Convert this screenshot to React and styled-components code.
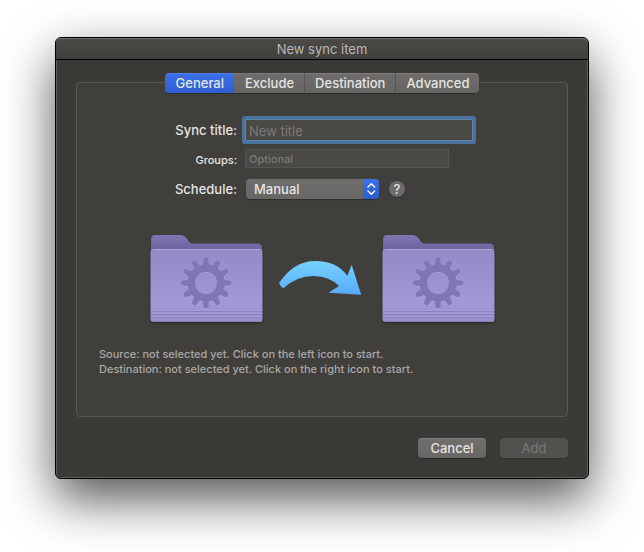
import React, { useState } from "react";
import styled, { createGlobalStyle } from "styled-components";

const tabs = ["General", "Exclude", "Destination", "Advanced"];

const GlobalStyle = createGlobalStyle`
  * {
    box-sizing: border-box;
  }

  body {
    margin: 0;
    background: #fff;
    font-family: Inter, "Liberation Sans", sans-serif;
    font-size: 13px;
    color: #e4e4e3;
  }

  button, input, select {
    margin: 0;
    font-family: inherit;
    font-size: inherit;
    color: inherit;
  }
`;

const Page = styled.main`
  padding: 37px 55px 73px;
`;

const Window = styled.section`
  border: 1px solid #000;
  border-radius: 6px;
  background: #3b3a37;
  box-shadow: inset 0 0 0 1px #5f5e5b, 0 20px 50px rgba(0, 0, 0, 0.68);
`;

const TitleBar = styled.header`
  height: 22px;
  border-bottom: 1px solid #000;
  border-radius: 5px 5px 0 0;
  background: linear-gradient(#4b4a47, #41403d);
  box-shadow: inset 0 1px 0 #6c6b68;
`;

const Title = styled.h1`
  margin: 0;
  font-size: 13px;
  font-weight: 400;
  line-height: 22px;
  text-align: center;
  color: #b9b8b6;
`;

const Content = styled.div`
  padding: 13px 20px 20px;
`;

const Tabs = styled.div`
  position: relative;
  display: flex;
  width: fit-content;
  margin: 0 auto;
  border-radius: 4px;
  overflow: hidden;
  box-shadow: 0 1px 1px rgba(0, 0, 0, 0.3);
`;

const Tab = styled.button`
  height: 20px;
  padding: 0 10px;
  border: 0;
  border-left: 1px solid ${(props) => (props.$divided ? "#555452" : "transparent")};
  background: ${(props) =>
    props.$active
      ? "linear-gradient(#3b70e6, #2f60d2) border-box"
      : "linear-gradient(#6e6d6b, #666563) border-box"};
  box-shadow: inset 0 1px 0 rgba(255, 255, 255, 0.1);
  font-weight: 500;
  line-height: 20px;
`;

const Panel = styled.div`
  margin-top: -11px;
  padding: 36px 22px 39px;
  border: 1px solid #585754;
  border-radius: 4px;
  background: #403f3c;
`;

const Form = styled.div`
  display: grid;
  grid-template-columns: 138px minmax(0, 1fr);
  column-gap: 8px;
  align-items: center;
`;

const Label = styled.label`
  font-size: ${(props) => (props.$small ? "11px" : "13px")};
  font-weight: 500;
  text-align: right;
`;

const Input = styled.input`
  width: 100%;
  border: 1px solid #565552;
  background: #4a4946;
  padding: 0 3px;
  outline: none;

  &::placeholder {
    color: #7b7a78;
    opacity: 1;
  }
`;

const TitleInput = styled(Input)`
  max-width: 228px;
  height: 22px;
  padding-top: 2px;
  border-color: #5d86ad;
  box-shadow: 0 0 0 3px #48719b;
  border-radius: 1px;
`;

const GroupsInput = styled(Input)`
  max-width: 204px;
  height: 19px;
  margin: 8px 0 11px;
  font-size: 11px;
  font-weight: 500;
`;

const ScheduleRow = styled.div`
  display: flex;
  align-items: center;
  gap: 10px;
  padding-left: 1px;
`;

const SelectBox = styled.div`
  position: relative;
  width: 133px;
  height: 20px;
  border-radius: 4px;
  overflow: hidden;
  box-shadow: 0 1px 1px rgba(0, 0, 0, 0.3);
`;

const Select = styled.select`
  width: 100%;
  height: 20px;
  padding: 0 24px 0 8px;
  border: 0;
  appearance: none;
  background: linear-gradient(#6e6d6b, #686765);
  font-weight: 500;
  outline: none;
`;

const Arrows = styled.svg`
  position: absolute;
  top: 0;
  right: 0;
  width: 16px;
  height: 20px;
  background: linear-gradient(#3b70e6, #2b5cce);
  pointer-events: none;
`;

const HelpButton = styled.button`
  width: 16px;
  height: 16px;
  padding: 0;
  border: 0;
  border-radius: 50%;
  background: #6c6b69;
  box-shadow: 0 1px 1px rgba(0, 0, 0, 0.3);
  font-weight: 500;
  line-height: 16px;
`;

const Folders = styled.div`
  display: flex;
  justify-content: center;
  gap: 16px;
  margin-top: 36px;
`;

const FolderButton = styled.button`
  padding: 0;
  border: 0;
  background: none;

  svg {
    display: block;
    overflow: visible;
    filter: drop-shadow(0 1px 1px rgba(0, 0, 0, 0.4));
  }
`;

const Status = styled.p`
  margin: 24px 0 0;
  font-size: 11px;
  font-weight: 500;
  line-height: 15px;
  color: #a9a8a6;
`;

const Footer = styled.footer`
  display: flex;
  justify-content: flex-end;
  gap: 14px;
  margin-top: 21px;
`;

const Button = styled.button`
  width: 68px;
  height: 20px;
  padding: 0;
  border: 0;
  border-radius: 4px;
  background: linear-gradient(#706f6d, #686765);
  box-shadow: inset 0 1px 0 rgba(255, 255, 255, 0.1), 0 1px 1px rgba(0, 0, 0, 0.3);
  font-weight: 500;
  line-height: 20px;

  &:disabled {
    background: #52514e;
    box-shadow: 0 1px 1px rgba(0, 0, 0, 0.15);
    color: #797876;
    font-weight: 400;
  }
`;

const teeth = Array.from({ length: 12 }, (_, i) => i * 30);

const Gear = ({ fill }) => (
  <g fill={fill}>
    <path
      fillRule="evenodd"
      d="M56 29.5a18.5 18.5 0 1 0 0 37a18.5 18.5 0 1 0 0-37zM56 37a11 11 0 1 1 0 22a11 11 0 1 1 0-22z"
    />
    {teeth.map((angle) => (
      <path
        key={angle}
        d="M51.6 31.5Q53.4 29.6 53.5 24.6Q53.6 22.500 56 22.500Q58.4 22.500 58.5 24.6Q58.6 29.6 60.4 31.5z"
        transform={`rotate(${angle} 56 48)`}
      />
    ))}
  </g>
);

const Folder = ({ id }) => (
  <svg width="112" height="88" viewBox="0 0 112 88" aria-hidden="true">
    <defs>
      <linearGradient id={`${id}-back`} x1="0" y1="0" x2="0" y2="1">
        <stop offset="0" stopColor="#7e75b2" />
        <stop offset="0.5" stopColor="#736aa5" />
        <stop offset="1" stopColor="#625a8f" />
      </linearGradient>
      <linearGradient id={`${id}-front`} x1="0" y1="0" x2="0" y2="1">
        <stop offset="0" stopColor="#938ac6" />
        <stop offset="0.75" stopColor="#a199d5" />
        <stop offset="1" stopColor="#978fca" />
      </linearGradient>
    </defs>
    <path
      d="M1 20V4Q1 0 5 0H31Q34 0 36 2.5L39 6.5Q40.5 8.5 43 8.5H108Q112 8.5 112 12.5V20z"
      fill={`url(#${id}-back)`}
    />
    <rect x="0.5" y="14" width="112" height="73" rx="3" fill={`url(#${id}-front)`} />
    <path d="M3 14.5H110" stroke="#b0a9e0" />
    <path d="M1 76.5H112M1 79.5H112M1 82.5H112" stroke="#8a81bd" />
    <path d="M1 75.5H112M1 78.5H112M1 81.5H112" stroke="#a59dd8" />
    <path d="M3 86.5H110" stroke="#837bb4" />
    <g transform="translate(0 0.7)">
      <Gear fill="#aca5dd" />
    </g>
    <Gear fill="#7f76b4" />
  </svg>
);

const Arrow = () => (
  <svg width="88" height="88" viewBox="0 0 88 88" aria-hidden="true">
    <defs>
      <linearGradient id="arrow" x1="0" y1="0" x2="0" y2="1">
        <stop offset="0" stopColor="#76d3ff" />
        <stop offset="1" stopColor="#57a9fb" />
      </linearGradient>
    </defs>
    <path
      d="M1 48Q16 26 37 26Q59 26 69.3 40.8L73.7 30L83.2 59.8L50.5 57.7L61 51Q51 41 35.5 41Q19 41 5.3 53.3Q2.2 51.5 1 48z"
      fill="url(#arrow)"
    />
  </svg>
);

const App = () => {
  const [active, setActive] = useState("General");

  return (
    <>
      <GlobalStyle />
      <Page>
        <Window>
          <TitleBar>
            <Title>New sync item</Title>
          </TitleBar>
          <Content>
            <Tabs role="tablist">
              {tabs.map((tab, i) => (
                <Tab
                  key={tab}
                  role="tab"
                  aria-selected={tab === active}
                  $active={tab === active}
                  $divided={i > 1}
                  onClick={() => setActive(tab)}
                >
                  {tab}
                </Tab>
              ))}
            </Tabs>
            <Panel>
              <Form>
                <Label htmlFor="title">Sync title:</Label>
                <TitleInput id="title" placeholder="New title" />
                <Label htmlFor="groups" $small>
                  Groups:
                </Label>
                <GroupsInput id="groups" placeholder="Optional" />
                <Label htmlFor="schedule">Schedule:</Label>
                <ScheduleRow>
                  <SelectBox>
                    <Select id="schedule" defaultValue="Manual">
                      <option>Manual</option>
                    </Select>
                    <Arrows viewBox="0 0 16 20" aria-hidden="true">
                      <path
                        d="M5 8L8.3 4.800L11.6 8M5 12L8.3 15.200L11.6 12"
                        fill="none"
                        stroke="#fff"
                        strokeWidth="1.4"
                        strokeLinecap="round"
                        strokeLinejoin="round"
                      />
                    </Arrows>
                  </SelectBox>
                  <HelpButton>?</HelpButton>
                </ScheduleRow>
              </Form>
              <Folders>
                <FolderButton aria-label="Source">
                  <Folder id="source" />
                </FolderButton>
                <Arrow />
                <FolderButton aria-label="Destination">
                  <Folder id="destination" />
                </FolderButton>
              </Folders>
              <Status>
                Source: not selected yet. Click on the left icon to start.
                <br />
                Destination: not selected yet. Click on the right icon to start.
              </Status>
            </Panel>
            <Footer>
              <Button>Cancel</Button>
              <Button disabled>Add</Button>
            </Footer>
          </Content>
        </Window>
      </Page>
    </>
  );
};

export default App;
